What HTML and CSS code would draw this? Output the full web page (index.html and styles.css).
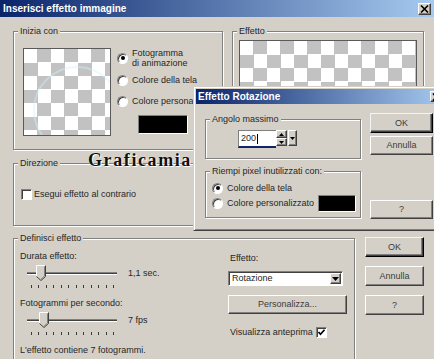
FILE: index.html
```html
<!DOCTYPE html>
<html lang="it">
<head>
  <meta charset="UTF-8">
  <title>Inserisci effetto immagine</title>
  <link rel="stylesheet" href="styles.css">
</head>
<body>

<div class="window">
  <div class="titlebar">
    <span class="title">Inserisci effetto immagine</span>
    <span class="close-btn"><svg width="9" height="8" viewBox="0 0 9 8"><path d="M1 0.5 L8 7.5 M8 0.5 L1 7.5" stroke="#000" stroke-width="1.6"/></svg></span>
  </div>

  <div class="content">
    <div class="top-row">
      <div class="group start">
        <div class="group-title">Inizia con</div>
        <div class="start-body">
          <div class="preview small"></div>
          <div class="start-options">
            <div class="radio-row two-line"><span class="radio checked"></span><span>Fotogramma<br>di animazione</span></div>
            <div class="radio-row r2"><span class="radio"></span><span>Colore della tela</span></div>
            <div class="radio-row r3"><span class="radio"></span><span>Colore personalizzato</span></div>
            <div class="swatch start-swatch"></div>
          </div>
        </div>
      </div>

      <div class="group effect">
        <div class="group-title">Effetto</div>
        <div class="effect-body">
          <div class="preview wide"></div>
        </div>
      </div>
    </div>

    <div class="group direction">
      <div class="group-title">Direzione</div>
      <div class="direction-body">
        <div class="check-row"><span class="checkbox"></span><span>Esegui effetto al contrario</span></div>
      </div>
    </div>

    <div class="bottom-row">
      <div class="group define">
        <div class="group-title">Definisci effetto</div>
        <div class="define-body">
          <div class="define-left">
            <div class="label">Durata effetto:</div>
            <div class="slider-row">
              <div class="slider">
                <div class="track"></div>
                <svg class="thumb" style="left: 16px" width="10" height="16" viewBox="0 0 10 16">
                  <path d="M0.5 0.5 H9.5 V11.5 L5 15.5 L0.5 11.5 Z" fill="#d4d0c8"/>
                  <path d="M0.5 11.5 V0.5 H9.5" fill="none" stroke="#fff"/>
                  <path d="M9.5 0.5 V11.5 L5 15.5 L0.5 11.5" fill="none" stroke="#404040"/>
                  <path d="M8.5 1.5 V11 L5 14.2" fill="none" stroke="#808080"/>
                </svg>
                <div class="ticks">
                  <i></i><i></i><i></i><i></i><i></i><i></i><i></i><i></i><i></i><i></i><i></i><i></i>
                </div>
              </div>
              <span class="slider-value">1,1 sec.</span>
            </div>

            <div class="label second">Fotogrammi per secondo:</div>
            <div class="slider-row">
              <div class="slider">
                <div class="track"></div>
                <svg class="thumb" style="left: 19px" width="10" height="16" viewBox="0 0 10 16">
                  <path d="M0.5 0.5 H9.5 V11.5 L5 15.5 L0.5 11.5 Z" fill="#d4d0c8"/>
                  <path d="M0.5 11.5 V0.5 H9.5" fill="none" stroke="#fff"/>
                  <path d="M9.5 0.5 V11.5 L5 15.5 L0.5 11.5" fill="none" stroke="#404040"/>
                  <path d="M8.5 1.5 V11 L5 14.2" fill="none" stroke="#808080"/>
                </svg>
                <div class="ticks">
                  <i></i><i></i><i></i><i></i><i></i><i></i><i></i><i></i><i></i><i></i><i></i><i></i>
                </div>
              </div>
              <span class="slider-value">7 fps</span>
            </div>

            <div class="label summary">L'effetto contiene 7 fotogrammi.</div>
          </div>

          <div class="define-right">
            <div class="label">Effetto:</div>
            <div class="select">
              <span>Rotazione</span>
              <span class="select-arrow"><svg width="7" height="4" viewBox="0 0 7 4"><path d="M0 0 H7 L3.5 4 Z" fill="#000"/></svg></span>
            </div>
            <div class="btn custom-btn">Personalizza...</div>
            <div class="check-row preview-row">
              <span>Visualizza anteprima</span>
              <span class="checkbox"><svg width="9" height="9" viewBox="0 0 9 9"><path d="M1.5 4 L3.5 6.2 L7.5 1.8" fill="none" stroke="#000" stroke-width="1.7"/></svg></span>
            </div>
          </div>
        </div>
      </div>

      <div class="btn-col">
        <div class="btn default">OK</div>
        <div class="btn">Annulla</div>
        <div class="btn">?</div>
      </div>
    </div>
  </div>

  <div class="watermark">Graficamia</div>

  <!-- second dialog on top -->
  <div class="dialog">
    <div class="titlebar">
      <span class="title">Effetto Rotazione</span>
      <span class="close-btn"><svg width="9" height="8" viewBox="0 0 9 8"><path d="M1 0.5 L8 7.5 M8 0.5 L1 7.5" stroke="#000" stroke-width="1.6"/></svg></span>
    </div>
    <div class="dialog-body">
      <div class="dialog-left">
        <div class="group angle">
          <div class="group-title">Angolo massimo</div>
          <div class="angle-body">
            <div class="spin">
              <div class="spin-input">200<span class="caret"></span></div>
              <div class="spin-btns">
                <span><svg width="5" height="3" viewBox="0 0 5 3"><path d="M0 3 H5 L2.5 0 Z" fill="#000"/></svg></span>
                <span><svg width="5" height="3" viewBox="0 0 5 3"><path d="M0 0 H5 L2.5 3 Z" fill="#000"/></svg></span>
              </div>
              <div class="spin-drop"><svg width="5" height="3" viewBox="0 0 5 3"><path d="M0 0 H5 L2.5 3 Z" fill="#000"/></svg></div>
            </div>
          </div>
        </div>

        <div class="group fill">
          <div class="group-title">Riempi pixel inutilizzati con:</div>
          <div class="fill-body">
            <div class="radio-row"><span class="radio checked"></span><span>Colore della tela</span></div>
            <div class="radio-row custom"><span class="radio"></span><span>Colore personalizzato</span><span class="swatch fill-swatch"></span></div>
          </div>
        </div>
      </div>

      <div class="dialog-btns">
        <div class="btn default">OK</div>
        <div class="btn annulla">Annulla</div>
        <div class="btn help">?</div>
      </div>
    </div>
  </div>
</div>

</body>
</html>
```

FILE: styles.css
```css
* {
  margin: 0;
  box-sizing: border-box;
}

body {
  margin: 0;
  background-color: #d4d0c8;
  font-family: "Liberation Sans", Arial, sans-serif;
  font-size: 9px;
  line-height: 11px;
  color: #262626;
}

.window {
  position: relative;
  width: 434px;
  height: 359px;
  overflow: hidden;
  background-color: #d4d0c8;
}

/* Title bars */
.titlebar {
  display: flex;
  align-items: center;
  justify-content: space-between;
  height: 17px;
  padding: 0 3px;
  background: linear-gradient(to right, #0a246a, #a6caf0);
}

.title {
  color: #fff;
  font-weight: bold;
  font-size: 10px;
  white-space: nowrap;
}

.close-btn {
  display: flex;
  align-items: center;
  justify-content: center;
  width: 13px;
  height: 12px;
  background-color: #d4d0c8;
  border: 1px solid;
  border-color: #fff #404040 #404040 #fff;
  box-shadow: inset -1px -1px #808080;
}

/* Main layout */
.content {
  padding: 14px 0 0 13px;
}

.top-row {
  display: flex;
  gap: 9px;
}

.group {
  border: 1px solid #808080;
  box-shadow: inset 1px 1px #fff, 1px 1px #fff;
}

.group-title {
  width: fit-content;
  margin: -6px 0 -5px 4px;
  padding: 0 2px;
  height: 11px;
  background-color: #d4d0c8;
  white-space: nowrap;
}

.start {
  width: 210px;
  height: 119px;
}

.start-body {
  display: flex;
  padding: 16px 0 0 9px;
}

.preview {
  position: relative;
  overflow: hidden;
  border: 1px solid #5a5a5a;
  background-color: #fff;
  background-image: conic-gradient(#c2c2c2 25%, #fff 0 50%, #c2c2c2 0 75%, #fff 0);
  background-size: 27px 27px;
}

.preview.small {
  width: 88px;
  height: 88px;
  flex: none;
}

.preview.small::after {
  content: "";
  position: absolute;
  left: 9px;
  top: 17px;
  width: 84px;
  height: 84px;
  border-radius: 50%;
  border: 2px solid rgba(210, 242, 252, 0.45);
}

.preview.wide {
  width: 178px;
  height: 100px;
}

.start-options {
  display: flex;
  flex-direction: column;
  align-items: flex-start;
  margin-left: 6px;
}

.radio-row {
  display: flex;
  align-items: center;
  gap: 4px;
  white-space: nowrap;
}

.two-line {
  line-height: 10px;
}

.r2 {
  margin-top: 7px;
}

.r3 {
  margin-top: 10px;
}

.radio {
  display: flex;
  align-items: center;
  justify-content: center;
  flex: none;
  width: 11px;
  height: 11px;
  border-radius: 50%;
  background-color: #fff;
  border: 1px solid;
  border-color: #808080 #fff #fff #808080;
  box-shadow: inset 1px 1px #404040;
}

.radio.checked::after {
  content: "";
  width: 4px;
  height: 4px;
  border-radius: 50%;
  background-color: #000;
}

.swatch {
  background-color: #000;
  border: 1px solid;
  border-color: #808080 #fff #fff #808080;
}

.start-swatch {
  width: 50px;
  height: 19px;
  margin: 8px 0 0 21px;
}

.effect {
  width: 192px;
  height: 119px;
}

.effect-body {
  padding: 8px 0 0 6px;
}

.direction {
  width: 210px;
  height: 63px;
  margin-top: 13px;
}

.direction-body {
  padding: 25px 0 0 7px;
}

.check-row {
  display: flex;
  align-items: center;
  gap: 2px;
  white-space: nowrap;
}

.checkbox {
  display: flex;
  align-items: center;
  justify-content: center;
  flex: none;
  width: 11px;
  height: 11px;
  background-color: #fff;
  border: 1px solid;
  border-color: #808080 #fff #fff #808080;
  box-shadow: inset 1px 1px #404040;
}

/* Bottom section */
.bottom-row {
  display: flex;
  align-items: flex-start;
  margin-top: 12px;
}

.define {
  width: 342px;
  height: 130px;
}

.define-body {
  display: flex;
}

.define-left {
  width: 214px;
  padding: 12px 0 0 6px;
}

.slider-row {
  display: flex;
  align-items: flex-start;
  margin-top: 3px;
}

.slider {
  position: relative;
  width: 104px;
  height: 23px;
}

.track {
  width: 90px;
  height: 3px;
  margin: 7px 0 0 7px;
  background-color: #404040;
  border-top: 1px solid #808080;
  border-bottom: 1px solid #fff;
}

.thumb {
  position: absolute;
  top: 0;
}

.ticks {
  display: flex;
  justify-content: space-between;
  width: 83px;
  margin: 10px 0 0 11px;
}

.ticks i {
  width: 1px;
  height: 3px;
  background-color: #3a3a3a;
}

.slider-value {
  margin: 3px 0 0 4px;
  white-space: nowrap;
}

.label.second {
  margin-top: 10px;
}

.label.summary {
  margin-top: 10px;
  white-space: nowrap;
}

.define-right {
  width: 119px;
  padding-top: 14px;
}

.define-right .label {
  padding-left: 2px;
}

.select {
  display: flex;
  align-items: center;
  justify-content: space-between;
  width: 115px;
  height: 15px;
  margin-top: 7px;
  padding: 0 1px 0 3px;
  background-color: #fff;
  border: 1px solid;
  border-color: #808080 #fff #fff #808080;
  box-shadow: inset 1px 1px #404040;
}

.select-arrow {
  display: flex;
  align-items: center;
  justify-content: center;
  width: 11px;
  height: 11px;
  background-color: #d4d0c8;
  border: 1px solid;
  border-color: #fff #404040 #404040 #fff;
  box-shadow: inset -1px -1px #808080;
}

.btn {
  display: flex;
  align-items: center;
  justify-content: center;
  height: 20px;
  color: #3c3c3c;
  background-color: #d4d0c8;
  border: 1px solid;
  border-color: #fff #404040 #404040 #fff;
  box-shadow: inset -1px -1px #808080;
}

.btn.default {
  border-color: #f4f4f4 #000 #000 #f4f4f4;
  box-shadow: inset -1px -1px #404040, inset -2px -2px #808080;
}

.custom-btn {
  width: 119px;
  height: 19px;
  margin-top: 9px;
}

.preview-row {
  margin-top: 13px;
  padding-left: 2px;
  gap: 3px;
}

.btn-col {
  display: flex;
  flex-direction: column;
  gap: 9px;
  width: 59px;
  margin: -1px 0 0 10px;
}

/* Watermark text over the dialog */
.watermark {
  position: absolute;
  left: 88px;
  top: 151px;
  font-family: "Liberation Serif", "Times New Roman", serif;
  font-weight: bold;
  font-size: 18px;
  line-height: 18px;
  letter-spacing: 1.6px;
  color: #111;
  text-shadow: 1px 1px 0 #fff, 0 0 1px #fff;
}

/* Effetto Rotazione dialog */
.dialog {
  position: absolute;
  left: 193px;
  top: 86px;
  width: 255px;
  height: 145px;
  padding: 2px;
  background-color: #d4d0c8;
  border: 1px solid;
  border-color: #d4d0c8 #404040 #404040 #d4d0c8;
  box-shadow: inset 1px 1px #fff, inset -1px -1px #808080;
}

.dialog .titlebar {
  height: 15px;
  padding: 0 2px 0 2px;
}

.dialog .close-btn {
  height: 11px;
}

.dialog-body {
  display: flex;
}

.dialog-left {
  width: 156px;
  margin-left: 9px;
  padding-top: 15px;
}

.angle {
  height: 40px;
}

.angle-body {
  padding: 10px 0 0 32px;
}

.spin {
  display: flex;
  height: 18px;
}

.spin-input {
  display: flex;
  align-items: center;
  width: 38px;
  height: 18px;
  padding-left: 2px;
  background-color: #fff;
  border-top: 1px solid #808080;
  border-left: 1px solid #808080;
  border-bottom: 2px solid #10246a;
}

.caret {
  width: 1px;
  height: 10px;
  margin-left: 1px;
  background-color: #000;
}

.spin-btns {
  display: flex;
  flex-direction: column;
  width: 11px;
  height: 16px;
}

.spin-btns span,
.spin-drop {
  display: flex;
  align-items: center;
  justify-content: center;
  background-color: #d4d0c8;
  border: 1px solid;
  border-color: #fff #404040 #404040 #fff;
  box-shadow: inset -1px -1px #808080;
}

.spin-btns span {
  height: 8px;
}

.spin-drop {
  width: 9px;
  height: 16px;
  margin-left: 1px;
}

.fill {
  height: 47px;
  margin-top: 12px;
}

.fill-body {
  padding: 10px 4px 0 6px;
}

.fill-body .radio-row {
  height: 12px;
}

.fill-body .custom {
  height: 17px;
  margin-top: 1px;
}

.fill-swatch {
  width: 39px;
  height: 17px;
  margin-left: auto;
}

.dialog-btns {
  display: flex;
  flex-direction: column;
  width: 63px;
  margin-left: 9px;
  padding-top: 9px;
}

.dialog-btns .annulla {
  height: 19px;
  margin-top: 3px;
}

.dialog-btns .help {
  height: 19px;
  margin-top: 45px;
}
```
